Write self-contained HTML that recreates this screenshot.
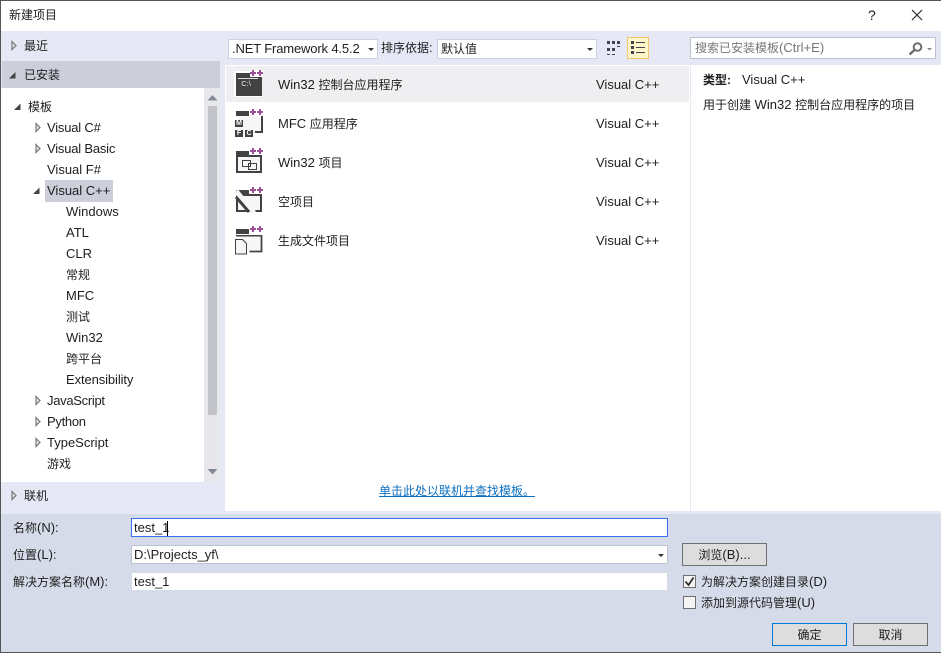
<!DOCTYPE html>
<html><head><meta charset="utf-8"><style>
html,body{margin:0;padding:0;width:941px;height:653px;overflow:hidden;background:#fff}
body{font-family:"Liberation Sans","Noto Sans CJK SC",sans-serif;font-size:13px;color:#1e1e1e;position:relative}
.r{position:absolute}
.t{position:absolute;white-space:nowrap;line-height:18px;height:18px}
.t i{font-style:normal;font-size:12px}
svg{position:absolute;overflow:visible}
</style></head><body>
<div class="r" style="left:1px;top:31px;width:940px;height:483px;background:#e6e9f5"></div>
<div class="r" style="left:1px;top:514px;width:940px;height:138px;background:#d6dbe9"></div>
<div class="r" style="left:0;top:0;width:941px;height:1px;background:#555"></div>
<div class="r" style="left:0;top:0;width:1px;height:653px;background:#555"></div>
<div class="r" style="left:0;top:652px;width:941px;height:1px;background:#555"></div>
<div class="t" style="left:9px;top:6px"><i>新建项目</i></div>
<div class="t" style="left:868px;top:6px;font-size:14px">?</div>
<svg style="left:911px;top:9px" width="12" height="12"><path d="M1 1L11 11M11 1L1 11" stroke="#222" stroke-width="1.1" fill="none"/></svg>

<div class="r" style="left:2px;top:61px;width:218px;height:27px;background:#ccced9"></div>
<div class="r" style="left:1px;top:88px;width:203px;height:394px;background:#fff"></div>
<div class="r" style="left:204px;top:88px;width:16px;height:394px;background:#e8e8ec"></div>
<div class="r" style="left:208px;top:106px;width:9px;height:309px;background:#c2c3c9"></div>
<svg style="left:204px;top:88px" width="16" height="394"><path d="M3.500 12.500L8.500 7L13.500 12.500Z M3.500 381L13.500 381L8.500 386.500Z" fill="#868999"/></svg>

<svg style="left:0;top:0" width="120" height="510">
<g fill="#e4e4e4" stroke="#777" stroke-width="1.200"><path d="M12 41.500L16 45.500L12 49.500Z"/><path d="M12 491.500L16 495.500L12 499.500Z"/>
<path d="M36 123.500L40 127.500L36 131.500Z"/><path d="M36 144.500L40 148.500L36 152.500Z"/>
<path d="M36 396.500L40 400.500L36 404.500Z"/><path d="M36 417.500L40 421.500L36 425.500Z"/><path d="M36 438.500L40 442.500L36 446.500Z"/></g>
<g fill="#444"><path d="M9 78.500L15.500 72V78.500Z"/><path d="M14 110L20.500 103.500V110Z"/><path d="M33 194L39.500 187.500V194Z"/></g></svg>
<div class="r" style="left:45px;top:180px;width:68px;height:22px;background:#ccced9"></div>

<div class="t" style="left:24px;top:37px"><i>最近</i></div>
<div class="t" style="left:24px;top:66px"><i>已安装</i></div>
<div class="t" style="left:28px;top:98px"><i>模板</i></div>
<div class="t" style="left:47px;top:119px;letter-spacing:-.2px">Visual C#</div>
<div class="t" style="left:47px;top:140px;letter-spacing:-.2px">Visual Basic</div>
<div class="t" style="left:47px;top:161px">Visual F#</div>
<div class="t" style="left:47px;top:182px">Visual C++</div>
<div class="t" style="left:66px;top:203px">Windows</div>
<div class="t" style="left:66px;top:224px">ATL</div>
<div class="t" style="left:66px;top:245px">CLR</div>
<div class="t" style="left:66px;top:266px"><i>常规</i></div>
<div class="t" style="left:66px;top:287px">MFC</div>
<div class="t" style="left:66px;top:308px"><i>测试</i></div>
<div class="t" style="left:66px;top:329px">Win32</div>
<div class="t" style="left:66px;top:350px"><i>跨平台</i></div>
<div class="t" style="left:66px;top:371px;letter-spacing:-.1px">Extensibility</div>
<div class="t" style="left:47px;top:392px;letter-spacing:-.3px">JavaScript</div>
<div class="t" style="left:47px;top:413px;letter-spacing:-.3px">Python</div>
<div class="t" style="left:47px;top:434px">TypeScript</div>
<div class="t" style="left:47px;top:455px"><i>游戏</i></div>
<div class="t" style="left:24px;top:487px"><i>联机</i></div>

<div class="r" style="left:225px;top:65px;width:465px;height:446px;background:#fff"></div>
<div class="r" style="left:226px;top:66px;width:463px;height:36px;background:#efeff2"></div>
<div class="r" style="left:691px;top:65px;width:250px;height:446px;background:#fff"></div>

<div class="r" style="left:228px;top:39px;width:150px;height:20px;background:#fff;border:1px solid #ccd0e0;box-sizing:border-box"></div>
<div class="t" style="left:232px;top:40px;letter-spacing:-.15px">.NET Framework 4.5.2</div>
<svg style="left:368px;top:48px" width="6" height="3"><path d="M0 0H6L3 3Z" fill="#333"/></svg>
<div class="t" style="left:381px;top:39px"><i>排序依据</i>:</div>
<div class="r" style="left:437px;top:39px;width:160px;height:20px;background:#fff;border:1px solid #ccd0e0;box-sizing:border-box"></div>
<div class="t" style="left:441px;top:40px"><i>默认值</i></div>
<svg style="left:587px;top:48px" width="6" height="3"><path d="M0 0H6L3 3Z" fill="#333"/></svg>
<svg style="left:606px;top:40px" width="15" height="16"><path d="M1 1h3v3H1zM6 1h3v3H6zM11 1h3v3h-3zM1 8h3v3H1zM6 8h3v3H6zM11 6h3v1h-3zM1 14h3v1H1zM6 14h3v1H6z" fill="#424351"/></svg>
<div class="r" style="left:627px;top:37px;width:22px;height:22px;background:#fef5c8;border:1px solid #eec66f;box-sizing:border-box"></div>
<svg style="left:630px;top:40px" width="16" height="16"><path d="M1 1h3v3H1zM1 6h3v3H1zM1 11h3v3H1z" fill="#424351"/><path d="M6 2.500h9M6 7.500h9M6 12.500h9" stroke="#424351" fill="none"/></svg>
<div class="r" style="left:690px;top:37px;width:246px;height:22px;background:#fff;border:1px solid #bcc2d2;box-sizing:border-box"></div>
<div class="t" style="left:695px;top:39px;color:#777"><i>搜索已安装模板</i>(Ctrl+E)</div>
<svg style="left:908px;top:42px" width="26" height="14"><circle cx="9.500" cy="5" r="3.800" fill="none" stroke="#6e6e6e" stroke-width="2"/><path d="M6.500 8L1.500 12.500" stroke="#6e6e6e" stroke-width="2.500"/><path d="M19 6h5l-2.500 2.500z" fill="#888"/></svg>

<svg style="left:0;top:0" width="280" height="260">
<path d="M234 71h16v-1h13v7h-1v20h-28z" fill="#fff"/>
<g fill="#9b4f96"><path d="M250 72h6v2h-6zM252 70h2v6h-2zM257 72h6v2h-6zM259 70h2v6h-2z"/>
<path d="M250 111h6v2h-6zM252 109h2v6h-2zM257 111h6v2h-6zM259 109h2v6h-2z"/>
<path d="M250 150h6v2h-6zM252 148h2v6h-2zM257 150h6v2h-6zM259 148h2v6h-2z"/>
<path d="M250 189h6v2h-6zM252 187h2v6h-2zM257 189h6v2h-6zM259 187h2v6h-2z"/>
<path d="M250 228h6v2h-6zM252 226h2v6h-2zM257 228h6v2h-6zM259 226h2v6h-2z"/></g>
<path d="M236 73h14v4h12v19h-26z" fill="#424242"/><path d="M238 78.500h20" stroke="#ddd" fill="none"/>
<path d="M238 116h22v17h-22z" fill="#f6f6f6"/>
<path d="M236 111h13v5h-13z" fill="#424242"/><path d="M249 115h13v2h-13z" fill="#424242" opacity=".0"/>
<path d="M262 116v16h-7" stroke="#424242" stroke-width="2" fill="none"/>
<path d="M235 120h8v7h-8zM235 130h8v7h-8zM245 130h8v7h-8z" fill="#424242"/>
<path d="M236 151h13v4h13v18h-26z" fill="#424242"/><path d="M238 157h22v14h-22z" fill="#f6f6f6"/>
<path d="M242.500 160.500h8v6h-8zM248.500 163.500h8v6h-8z" fill="#f6f6f6" stroke="#424242"/>
<path d="M236 190h13v4h13v18h-26z" fill="#424242"/><path d="M238 196h22v14h-22z" fill="#f6f6f6"/>
<path d="M236 191L254 213" stroke="#f6f6f6" stroke-width="5" fill="none"/><path d="M236 197L249 212" stroke="#424242" stroke-width="3" fill="none"/>
<path d="M238 235h22v15h-22z" fill="#f6f6f6"/>
<path d="M236 229h13v5h-13z" fill="#424242"/><path d="M236 235h26v1.500h-26z" fill="#424242"/>
<path d="M261.500 235v16.500h-12" stroke="#424242" stroke-width="1.800" fill="none"/>
<path d="M235.500 239.500h7l4 4v10.500h-11z" fill="#f6f6f6" stroke="#424242"/>
</svg>
<div class="r" style="left:238px;top:79px;width:16px;text-align:center;font-size:7.500px;line-height:10px;color:#eee;height:10px">C:\</div>
<div class="r" style="left:235px;top:119px;width:8px;font-size:7px;line-height:9px;color:#fff;text-align:center;font-weight:bold">M</div>
<div class="r" style="left:235px;top:129px;width:8px;font-size:7px;line-height:9px;color:#fff;text-align:center;font-weight:bold">F</div>
<div class="r" style="left:245px;top:129px;width:8px;font-size:7px;line-height:9px;color:#fff;text-align:center;font-weight:bold">C</div>

<div class="t" style="left:278px;top:76px">Win32 <i>控制台应用程序</i></div>
<div class="t" style="left:278px;top:115px">MFC <i>应用程序</i></div>
<div class="t" style="left:278px;top:154px">Win32 <i>项目</i></div>
<div class="t" style="left:278px;top:193px"><i>空项目</i></div>
<div class="t" style="left:278px;top:232px"><i>生成文件项目</i></div>
<div class="t" style="left:596px;top:76px">Visual C++</div>
<div class="t" style="left:596px;top:115px">Visual C++</div>
<div class="t" style="left:596px;top:154px">Visual C++</div>
<div class="t" style="left:596px;top:193px">Visual C++</div>
<div class="t" style="left:596px;top:232px">Visual C++</div>
<div class="t" style="left:379px;top:482px;color:#0e70c0;text-decoration:underline"><i>单击此处以联机并查找模板。</i></div>

<div class="t" style="left:703px;top:71px"><i style="font-weight:bold">类型:</i></div>
<div class="t" style="left:742px;top:71px">Visual C++</div>
<div class="t" style="left:703px;top:96px"><i>用于创建</i> Win32 <i>控制台应用程序的项目</i></div>

<div class="t" style="left:13px;top:519px"><i>名称</i>(N):</div>
<div class="t" style="left:13px;top:546px"><i>位置</i>(L):</div>
<div class="t" style="left:13px;top:573px"><i>解决方案名称</i>(M):</div>
<div class="r" style="left:131px;top:518px;width:537px;height:19px;background:#fff;border:1px solid #3c6ff0;box-sizing:border-box"></div>
<div class="t" style="left:134px;top:519px">test_1</div>
<div class="r" style="left:167px;top:521px;width:1px;height:15px;background:#000"></div>
<div class="r" style="left:131px;top:545px;width:537px;height:19px;background:#fff;border:1px solid #bcc2d2;box-sizing:border-box"></div>
<div class="t" style="left:134px;top:546px">D:\Projects_yf\</div>
<svg style="left:658px;top:554px" width="6" height="3"><path d="M0 0H6L3 3Z" fill="#333"/></svg>
<div class="r" style="left:132px;top:573px;width:535px;height:17px;background:#fff"></div>
<div class="t" style="left:134px;top:573px">test_1</div>

<div class="r" style="left:682px;top:543px;width:85px;height:23px;background:#ddd;border:1px solid #707070;box-sizing:border-box"></div>
<div class="t" style="left:682px;top:546px;width:85px;text-align:center"><i>浏览</i>(B)...</div>
<div class="r" style="left:683px;top:575px;width:13px;height:13px;background:#f3f3f3;border:1px solid #6f6f6f;box-sizing:border-box"></div>
<svg style="left:683px;top:575px" width="13" height="13"><path d="M2.500 6.500L5.500 10L10.500 2.500" stroke="#222" stroke-width="1.600" fill="none"/></svg>
<div class="t" style="left:701px;top:573px"><i>为解决方案创建目录</i>(D)</div>
<div class="r" style="left:683px;top:596px;width:13px;height:13px;background:#f3f3f3;border:1px solid #6f6f6f;box-sizing:border-box"></div>
<div class="t" style="left:701px;top:594px"><i>添加到源代码管理</i>(U)</div>
<div class="r" style="left:772px;top:623px;width:75px;height:23px;background:#ddd;border:1px solid #0078d7;box-sizing:border-box"></div>
<div class="t" style="left:772px;top:626px;width:75px;text-align:center"><i>确定</i></div>
<div class="r" style="left:853px;top:623px;width:75px;height:23px;background:#ddd;border:1px solid #707070;box-sizing:border-box"></div>
<div class="t" style="left:853px;top:626px;width:75px;text-align:center"><i>取消</i></div>
</body></html>
